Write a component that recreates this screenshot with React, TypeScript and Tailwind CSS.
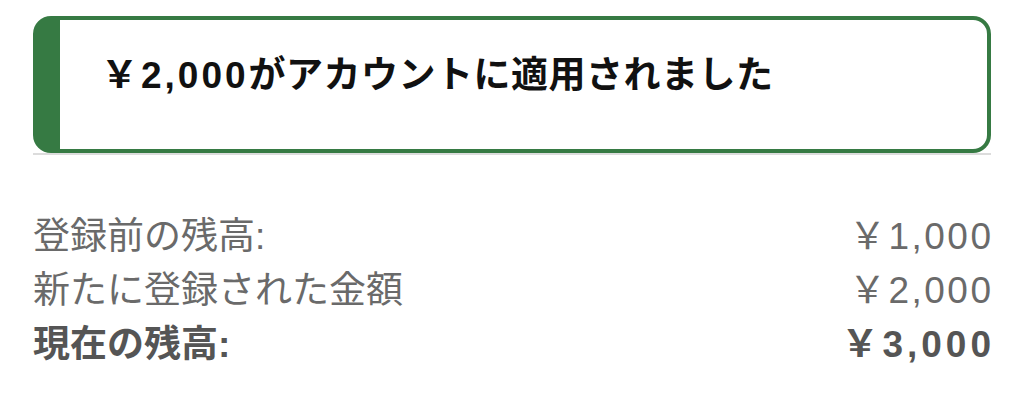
export default function App() {
  return (
    <div
      className="w-[1024px] h-[413px] bg-white px-[33px] pt-[16px]"
      style={{ fontFamily: '"Liberation Sans", "Noto Sans CJK JP", sans-serif' }}
    >
      <div className="border-b-[2px] border-[#dcdcdc]">
        <div className="h-[137px] rounded-[18px] border-[4px] border-l-[27px] border-[#367a43] pl-[41px] pt-[32px]">
          <div className="text-[37px] font-bold text-[#111] leading-[48px] tracking-[0.5px]">
            <span className="tracking-[3px]">￥2,000</span>がアカウントに適用されました
          </div>
        </div>
      </div>
      <div className="mt-[55px] text-[#6a6a6a] text-[37px] leading-[54px]">
        <div className="flex justify-between">
          <span>登録前の残高:</span>
          <span className="tracking-[2.5px] -mr-[2.5px]">￥1,000</span>
        </div>
        <div className="flex justify-between">
          <span>新たに登録された金額</span>
          <span className="tracking-[2.5px] -mr-[2.5px]">￥2,000</span>
        </div>
        <div className="flex justify-between font-bold text-[#555]">
          <span>現在の残高:</span>
          <span className="tracking-[4px] -mr-[4px]">￥3,000</span>
        </div>
      </div>
    </div>
  );
}
